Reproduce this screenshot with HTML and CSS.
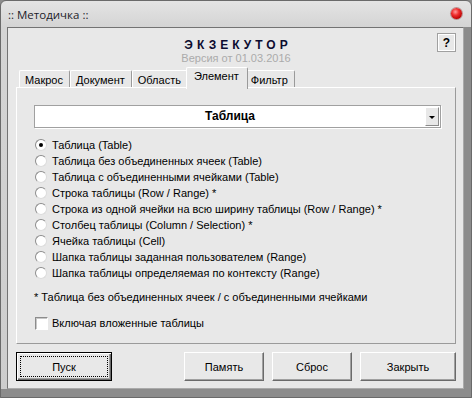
FILE: index.html
```html
<!DOCTYPE html>
<html>
<head>
    <title>Методичка</title>
    <link rel="stylesheet" href="styles.css">
</head>
<body>
    <div class="window">
        <div class="titlebar">
            <span class="title">:: Методичка ::</span>
            <span class="close-button"></span>
        </div>
        <div class="frame">
            <div class="client">
                <div class="header">
                    <div></div>
                    <div class="brand">
                        <div class="brand-name">ЭКЗЕКУТОР</div>
                        <div class="brand-version">Версия от 01.03.2016</div>
                    </div>
                    <div class="help-cell">
                        <button class="help-button">?</button>
                    </div>
                </div>

                <div class="tabs">
                    <div class="tab">Макрос</div>
                    <div class="tab">Документ</div>
                    <div class="tab">Область</div>
                    <div class="tab tab-active">Элемент</div>
                    <div class="tab">Фильтр</div>
                </div>

                <div class="tab-panel">
                    <div class="combo">
                        <div class="combo-value">Таблица</div>
                        <div class="combo-button"><span class="combo-arrow"></span></div>
                    </div>

                    <div class="radio-list">
                        <label class="radio-row"><span class="radio radio-checked"></span>Таблица (Table)</label>
                        <label class="radio-row"><span class="radio"></span>Таблица без объединенных ячеек (Table)</label>
                        <label class="radio-row"><span class="radio"></span>Таблица с объединенными ячейками (Table)</label>
                        <label class="radio-row"><span class="radio"></span>Строка таблицы (Row / Range) *</label>
                        <label class="radio-row"><span class="radio"></span>Строка из одной ячейки на всю ширину таблицы (Row / Range) *</label>
                        <label class="radio-row"><span class="radio"></span>Столбец таблицы (Column / Selection) *</label>
                        <label class="radio-row"><span class="radio"></span>Ячейка таблицы (Cell)</label>
                        <label class="radio-row"><span class="radio"></span>Шапка таблицы заданная пользователем (Range)</label>
                        <label class="radio-row"><span class="radio"></span>Шапка таблицы определяемая по контексту (Range)</label>
                    </div>

                    <div class="footnote">* Таблица без объединенных ячеек / с объединенными ячейками</div>

                    <label class="check-row"><span class="checkbox"></span>Включая вложенные таблицы</label>
                </div>

                <div class="button-row">
                    <button class="dlg-button default-button"><span class="focus-rect">Пуск</span></button>
                    <button class="dlg-button push-right">Память</button>
                    <button class="dlg-button">Сброс</button>
                    <button class="dlg-button wide-button">Закрыть</button>
                </div>
            </div>
        </div>
    </div>
</body>
</html>
```

FILE: styles.css
```css
body {
    margin: 0;
    background-color: #8c8c8c;
    font-family: "Liberation Sans", Arial, sans-serif;
    font-size: 11px;
    color: #000;
}
.window {
    width: 472px;
    height: 398px;
    box-sizing: border-box;
    display: flex;
    flex-direction: column;
    border: 1px solid #6a6a6a;
    border-radius: 6px 6px 0 0;
    background: linear-gradient(#e4e4e4, #d4d4d4 26px, #cdcdcd);
    overflow: hidden;
}
.titlebar {
    height: 26px;
    flex: none;
    display: flex;
    align-items: center;
    justify-content: space-between;
    padding: 0 9px 0 7px;
}
.title {
    font-family: "Open Sans", "Noto Sans", sans-serif;
    font-size: 11.5px;
    color: #1c1c2a;
    margin-top: 1px;
}
.close-button {
    width: 11px;
    height: 11px;
    border-radius: 50%;
    margin-top: -2px;
    background: radial-gradient(circle at 40% 35%, #ff9c9c 0, #f03030 35%, #b80000 75%, #8a0000 100%);
    box-shadow: 0 0 0 1px rgba(120, 0, 0, 0.35);
}
.frame {
    flex: 1;
    display: flex;
    padding-left: 6px;
    border-right: 7px solid #8c8c8c;
    border-bottom: 8px solid #8c8c8c;
}
.client {
    flex: 1;
    display: flex;
    flex-direction: column;
    padding: 5px 7px 7px 8px;
    background-color: #e8e8e8;
    border: 1px solid;
    border-color: #737373 #aaaaaa #aaaaaa #737373;
}

/* шапка */
.header {
    display: grid;
    grid-template-columns: 1fr auto 1fr;
    height: 31px;
}
.brand {
    text-align: center;
    padding-top: 6px;
}
.brand-name {
    font-weight: bold;
    font-size: 12px;
    line-height: 13px;
    letter-spacing: 4px;
    padding-left: 4px;
    color: #0c0c30;
}
.brand-version {
    line-height: 12px;
    color: #ababab;
}
.help-cell {
    display: flex;
    justify-content: flex-end;
    align-items: flex-start;
}
.help-button {
    width: 19px;
    height: 19px;
    padding: 0;
    font-family: "Liberation Sans", Arial, sans-serif;
    font-size: 12px;
    font-weight: bold;
    background-color: #e8e8e8;
    border: 1px solid #a0a0a0;
    box-shadow: inset 1px 1px #fff, inset -1px -1px #fff;
}

/* вкладки */
.tabs {
    display: flex;
    align-items: flex-end;
    height: 21px;
    margin-top: 3px;
    padding-left: 3px;
}
.tab {
    height: 18px;
    box-sizing: border-box;
    padding: 2px 6px 0 5px;
    border-top: 1px solid #fff;
    border-left: 1px solid #fff;
    border-right: 1px solid #9a9a9a;
    border-radius: 2px 2px 0 0;
    background-color: #e8e8e8;
    line-height: 14px;
}
.tab-active {
    position: relative;
    z-index: 1;
    height: 22px;
    margin: 0 -2px -1px -2px;
    padding: 1px 8px 0 7px;
}
.tab-active + .tab {
    border-left: none;
}
.tab-panel {
    height: 257px;
    box-sizing: border-box;
    margin-top: -1px;
    padding: 17px 14px 0 17px;
    border: 1px solid;
    border-color: #fff #9a9a9a #9a9a9a #fff;
}

/* выпадающий список */
.combo {
    display: flex;
    height: 23px;
    box-sizing: border-box;
    background-color: #fff;
    border: 1px solid #a0a0a0;
    box-shadow: 1px 1px 0 #fff;
}
.combo-value {
    flex: 1;
    text-align: center;
    font-weight: bold;
    font-size: 12px;
    line-height: 21px;
}
.combo-button {
    width: 14px;
    margin: 1px 1px 1px 0;
    display: flex;
    align-items: center;
    justify-content: center;
    background-color: #e8e8e8;
    border: 1px solid;
    border-color: #fff #8a8a8a #8a8a8a #fff;
    box-sizing: border-box;
}
.combo-arrow {
    width: 0;
    height: 0;
    border-left: 3px solid transparent;
    border-right: 3px solid transparent;
    border-top: 3px solid #000;
    margin-top: 2px;
}

/* переключатели */
.radio-list {
    margin-top: 9px;
}
.radio-row, .check-row {
    display: flex;
    align-items: center;
    height: 16px;
}
.radio {
    width: 12px;
    height: 12px;
    box-sizing: border-box;
    margin: 0 5px 0 1px;
    border-radius: 50%;
    background-color: #fff;
    border: 1px solid;
    border-color: #8c8c8c #dcdcdc #dcdcdc #8c8c8c;
    display: flex;
    align-items: center;
    justify-content: center;
}
.radio-checked::after {
    content: "";
    width: 4px;
    height: 4px;
    border-radius: 50%;
    background-color: #000;
}
.footnote {
    margin-top: 9px;
    line-height: 14px;
}
.check-row {
    margin-top: 11px;
}
.checkbox {
    width: 13px;
    height: 13px;
    box-sizing: border-box;
    margin: 0 4px 0 1px;
    background-color: #fff;
    border: 1px solid;
    border-color: #8c8c8c #fff #fff #8c8c8c;
    box-shadow: inset 1px 1px #c8c8c8;
}

/* кнопки */
.button-row {
    display: flex;
    gap: 8px;
    margin-top: 8px;
}
.dlg-button {
    width: 80px;
    height: 29px;
    padding: 0;
    font-family: "Liberation Sans", Arial, sans-serif;
    font-size: 11px;
    color: #000;
    background-color: #e8e8e8;
    border: 1px solid;
    border-color: #fff #6a6a6a #6a6a6a #fff;
    box-shadow: inset -1px -1px #a0a0a0;
}
.default-button {
    width: 96px;
    padding: 3px;
    border-color: #000;
    box-shadow: inset 1px 1px #fff, inset -1px -1px #6a6a6a, inset -2px -2px #a0a0a0;
}
.focus-rect {
    display: flex;
    align-items: center;
    justify-content: center;
    height: 100%;
    border: 1px dotted #000;
    box-sizing: border-box;
}
.push-right {
    margin-left: auto;
}
.wide-button {
    width: 96px;
}
```
